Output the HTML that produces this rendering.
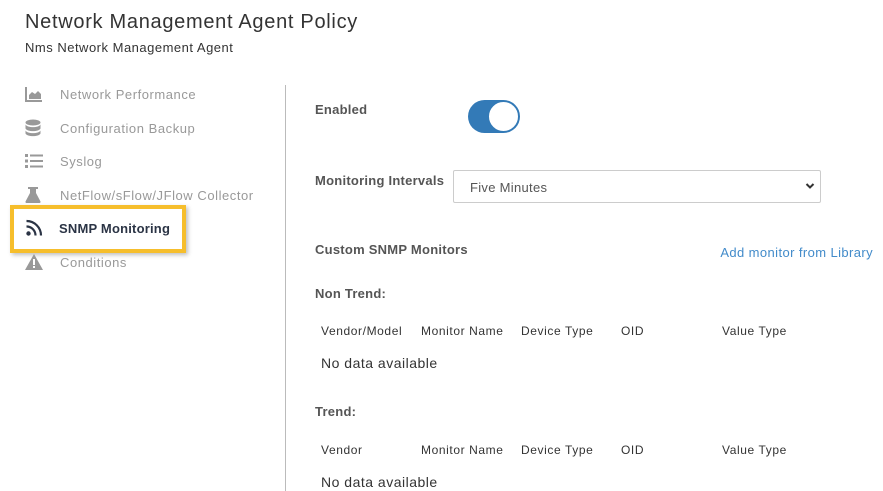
<!DOCTYPE html>
<html><head><meta charset="utf-8"><style>
*{margin:0;padding:0;box-sizing:border-box}
body{width:883px;height:491px;background:#fff;font-family:"Liberation Sans",sans-serif;position:relative;overflow:hidden;color:#333}
.a{position:absolute;white-space:nowrap}
.nav{left:60px;font-size:13px;color:#999;line-height:16px;letter-spacing:.55px}
.ic{position:absolute;left:25px}
.b{font-weight:bold;font-size:13px;color:#555;line-height:16px;letter-spacing:.25px}
.h{font-size:12px;color:#333;line-height:14px;letter-spacing:.6px}
.nd{font-size:14px;color:#333;line-height:16px;left:321px;letter-spacing:.5px}
</style></head><body>
<div class="a" style="left:25px;top:10px;font-size:20px;color:#333;line-height:24px;letter-spacing:.7px">Network Management Agent Policy</div>
<div class="a" style="left:25px;top:40px;font-size:13px;color:#333;line-height:15px;letter-spacing:.5px">Nms Network Management Agent</div>

<svg class="ic" style="top:86px" width="18" height="16" viewBox="0 0 18 16"><path d="M1 1V15H17" stroke="#999" stroke-width="2" fill="none"/><path d="M4 13V9L7 6L10 8L13 5L16 8V13Z" fill="#999"/></svg>
<div class="a nav" style="top:87px">Network Performance</div>
<svg class="ic" style="top:119px" width="16" height="18" viewBox="0 0 16 18"><ellipse cx="8" cy="3.5" rx="7.5" ry="3" fill="#999"/><path d="M.5 5.5C2 9 14 9 15.5 5.5V9.5C14 13 2 13 .5 9.5Z" fill="#999"/><path d="M.5 11.5C2 15 14 15 15.5 11.5V14.5C14 18 2 18 .5 14.5Z" fill="#999"/></svg>
<div class="a nav" style="top:121px">Configuration Backup</div>
<svg class="ic" style="top:153px" width="18" height="16" viewBox="0 0 18 16"><g fill="#999"><rect x="0" y="1" width="3" height="3"/><rect x="0" y="6.5" width="3" height="3"/><rect x="0" y="12" width="3" height="3"/><rect x="5" y="1.5" width="13" height="2"/><rect x="5" y="7" width="13" height="2"/><rect x="5" y="12.5" width="13" height="2"/></g></svg>
<div class="a nav" style="top:154px">Syslog</div>
<svg class="ic" style="top:186px" width="16" height="17" viewBox="0 0 16 17"><path d="M3 1H13V3H11V7L15.5 15.5C15.7 16 15.4 17 14.5 17H1.5C.6 17 .3 16 .5 15.5L5 7V3H3Z" fill="#999"/></svg>
<div class="a nav" style="top:188px">NetFlow/sFlow/JFlow Collector</div>

<div class="a" style="left:10px;top:205px;width:176px;height:48px;border:4px solid #f6be2c;box-shadow:2px 2px 4px rgba(0,0,0,.25)"></div>
<svg class="ic" style="top:219px" width="18" height="18" viewBox="0 0 18 18"><circle cx="3.5" cy="14.5" r="2.2" fill="#2b3445"/><path d="M1.5 7.5A9 9 0 0 1 10.5 16.5" stroke="#2b3445" stroke-width="2.2" fill="none"/><path d="M1.5 2A14.5 14.5 0 0 1 16 16.5" stroke="#2b3445" stroke-width="2.2" fill="none"/></svg>
<div class="a" style="left:59px;top:221px;font-size:13px;font-weight:bold;color:#2b3445;line-height:16px;letter-spacing:.2px">SNMP Monitoring</div>
<svg class="ic" style="top:254px" width="18" height="16" viewBox="0 0 18 16"><path d="M9 0L18 16H0Z" fill="#999"/><rect x="8" y="5" width="2" height="6" fill="#fff"/><rect x="8" y="12" width="2" height="2" fill="#fff"/></svg>
<div class="a nav" style="top:255px">Conditions</div>

<div class="a" style="left:285px;top:85px;width:1px;height:406px;background:#bbb"></div>

<div class="a b" style="left:315px;top:102px">Enabled</div>
<div class="a" style="left:468px;top:100px;width:52px;height:33px;border-radius:17px;background:#337ab7"></div>
<div class="a" style="left:488px;top:101px;width:31px;height:31px;border-radius:50%;background:#fff;border:1px solid #337ab7"></div>

<div class="a b" style="left:315px;top:173px">Monitoring Intervals</div>
<div class="a" style="left:453px;top:170px;width:368px;height:33px;border:1px solid #ccc;border-radius:2px"></div>
<div class="a" style="left:470px;top:180px;font-size:13px;color:#555;line-height:16px;letter-spacing:.3px">Five Minutes</div>
<svg class="a" style="left:805px;top:182px" width="10" height="8" viewBox="0 0 10 8"><path d="M1.5 2L5 5.5L8.5 2" stroke="#333" stroke-width="2" fill="none"/></svg>

<div class="a b" style="left:315px;top:242px">Custom SNMP Monitors</div>
<div class="a" style="right:10px;top:245px;font-size:13px;color:#428bca;line-height:16px;letter-spacing:.4px">Add monitor from Library</div>

<div class="a b" style="left:315px;top:286px">Non Trend:</div>
<div class="a h" style="left:321px;top:324px">Vendor/Model</div>
<div class="a h" style="left:421px;top:324px">Monitor Name</div>
<div class="a h" style="left:521px;top:324px">Device Type</div>
<div class="a h" style="left:621px;top:324px">OID</div>
<div class="a h" style="left:722px;top:324px">Value Type</div>
<div class="a nd" style="top:355px">No data available</div>

<div class="a b" style="left:315px;top:404px">Trend:</div>
<div class="a h" style="left:321px;top:443px">Vendor</div>
<div class="a h" style="left:421px;top:443px">Monitor Name</div>
<div class="a h" style="left:521px;top:443px">Device Type</div>
<div class="a h" style="left:621px;top:443px">OID</div>
<div class="a h" style="left:722px;top:443px">Value Type</div>
<div class="a nd" style="top:474px">No data available</div>
</body></html>
